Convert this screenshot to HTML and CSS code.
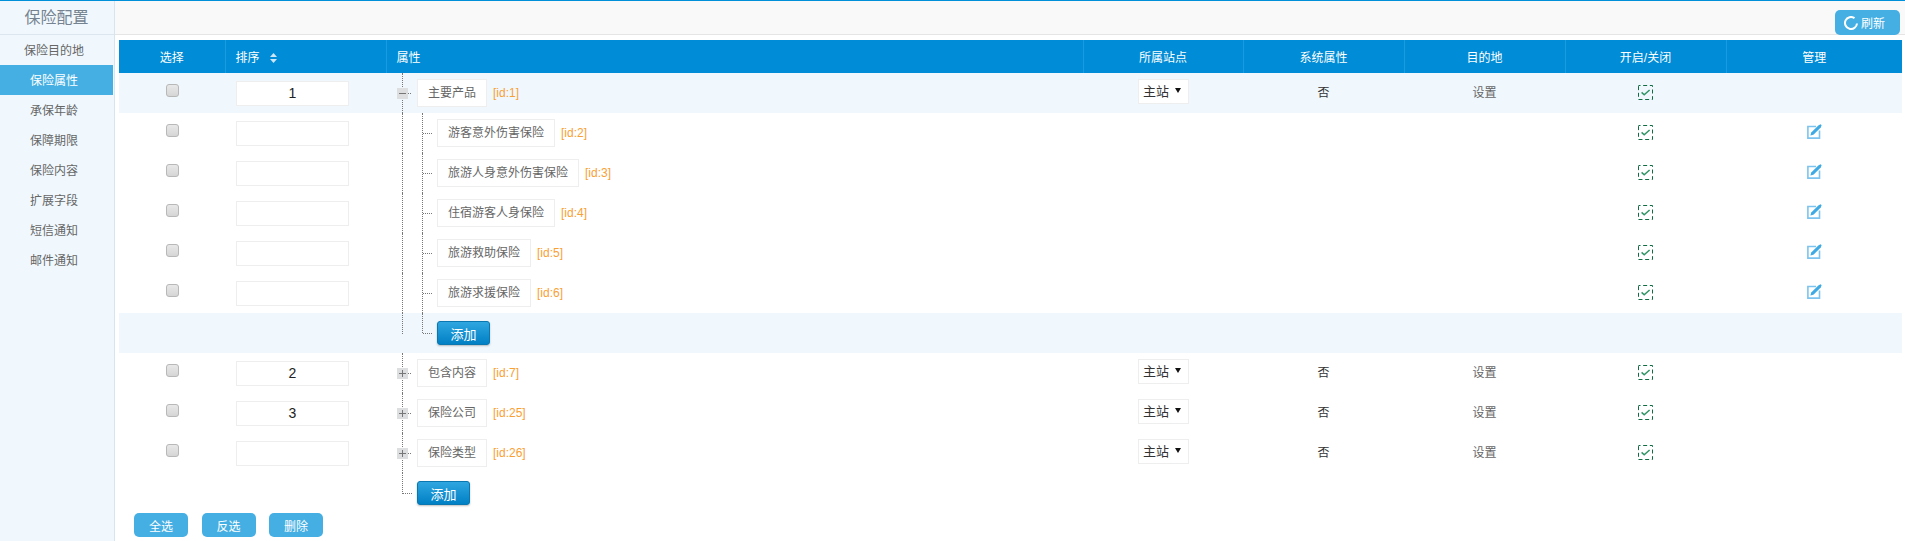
FILE: index.html
```html
<!DOCTYPE html>
<html lang="zh">
<head>
<meta charset="utf-8">
<title>保险配置</title>
<link rel="stylesheet" href="styles.css">
</head>
<body>
<div class="page">
  <aside class="side">
    <h1 class="side-title">保险配置</h1>
    <nav class="side-nav">
      <a class="side-item">保险目的地</a>
      <a class="side-item active">保险属性</a>
      <a class="side-item">承保年龄</a>
      <a class="side-item">保障期限</a>
      <a class="side-item">保险内容</a>
      <a class="side-item">扩展字段</a>
      <a class="side-item">短信通知</a>
      <a class="side-item">邮件通知</a>
    </nav>
  </aside>
  <main class="main">
    <div class="toolbar">
      <button class="btn refresh"><svg class="refresh-icon" viewBox="0 0 14 14"><path d="M10.5 2.1A6 6 0 1 0 13 7.5" fill="none" stroke="#fff" stroke-width="2"/></svg>刷新</button>
    </div>
    <div class="content">
      <table class="grid">
        <colgroup>
          <col class="c1"><col class="c2"><col class="c3"><col class="c4"><col class="c5"><col class="c6"><col class="c7"><col class="c8">
        </colgroup>
        <thead>
          <tr>
            <th>选择</th>
            <th class="left">排序<svg class="sort" viewBox="0 0 7 10"><path d="M3.5 0 7 4H0zM3.5 10 0 6h7z" fill="#cfe6f5"/></svg></th>
            <th class="left tree-head">属性</th>
            <th>所属站点</th><th>系统属性</th><th>目的地</th><th>开启/关闭</th><th>管理</th>
          </tr>
        </thead>
        <tbody>
          <tr class="tint">
            <td><input class="check" type="checkbox"></td>
            <td class="order"><input class="sort-input" type="text" value="1"></td>
            <td class="tree"><div class="node"><i class="toggle minus"></i><span class="label">主要产品</span><span class="id">[id:1]</span></div></td>
            <td><div class="site"><select class="site-select"><option>主站</option></select></div></td>
            <td class="plain dark">否</td><td class="plain">设置</td>
            <td><svg class="icon ok" viewBox="0 0 15 15"><use href="#ok"/></svg></td>
            <td></td>
          </tr>
          <tr>
            <td><input class="check" type="checkbox"></td>
            <td class="order"><input class="sort-input" type="text"></td>
            <td class="tree branch"><div class="node child"><span class="label">游客意外伤害保险</span><span class="id">[id:2]</span></div></td>
            <td></td><td></td><td></td>
            <td><svg class="icon ok" viewBox="0 0 15 15"><use href="#ok"/></svg></td>
            <td><svg class="icon pen" viewBox="0 0 15 15"><use href="#edit"/></svg></td>
          </tr>
          <tr>
            <td><input class="check" type="checkbox"></td>
            <td class="order"><input class="sort-input" type="text"></td>
            <td class="tree branch"><div class="node child"><span class="label">旅游人身意外伤害保险</span><span class="id">[id:3]</span></div></td>
            <td></td><td></td><td></td>
            <td><svg class="icon ok" viewBox="0 0 15 15"><use href="#ok"/></svg></td>
            <td><svg class="icon pen" viewBox="0 0 15 15"><use href="#edit"/></svg></td>
          </tr>
          <tr>
            <td><input class="check" type="checkbox"></td>
            <td class="order"><input class="sort-input" type="text"></td>
            <td class="tree branch"><div class="node child"><span class="label">住宿游客人身保险</span><span class="id">[id:4]</span></div></td>
            <td></td><td></td><td></td>
            <td><svg class="icon ok" viewBox="0 0 15 15"><use href="#ok"/></svg></td>
            <td><svg class="icon pen" viewBox="0 0 15 15"><use href="#edit"/></svg></td>
          </tr>
          <tr>
            <td><input class="check" type="checkbox"></td>
            <td class="order"><input class="sort-input" type="text"></td>
            <td class="tree branch"><div class="node child"><span class="label">旅游救助保险</span><span class="id">[id:5]</span></div></td>
            <td></td><td></td><td></td>
            <td><svg class="icon ok" viewBox="0 0 15 15"><use href="#ok"/></svg></td>
            <td><svg class="icon pen" viewBox="0 0 15 15"><use href="#edit"/></svg></td>
          </tr>
          <tr>
            <td><input class="check" type="checkbox"></td>
            <td class="order"><input class="sort-input" type="text"></td>
            <td class="tree branch"><div class="node child"><span class="label">旅游求援保险</span><span class="id">[id:6]</span></div></td>
            <td></td><td></td><td></td>
            <td><svg class="icon ok" viewBox="0 0 15 15"><use href="#ok"/></svg></td>
            <td><svg class="icon pen" viewBox="0 0 15 15"><use href="#edit"/></svg></td>
          </tr>
          <tr class="tint">
            <td></td><td></td>
            <td class="tree branch end"><div class="node child"><button class="add">添加</button></div></td>
            <td></td><td></td><td></td><td></td><td></td>
          </tr>
          <tr>
            <td><input class="check" type="checkbox"></td>
            <td class="order"><input class="sort-input" type="text" value="2"></td>
            <td class="tree"><div class="node"><i class="toggle"></i><span class="label">包含内容</span><span class="id">[id:7]</span></div></td>
            <td><div class="site"><select class="site-select"><option>主站</option></select></div></td>
            <td class="plain dark">否</td><td class="plain">设置</td>
            <td><svg class="icon ok" viewBox="0 0 15 15"><use href="#ok"/></svg></td>
            <td></td>
          </tr>
          <tr>
            <td><input class="check" type="checkbox"></td>
            <td class="order"><input class="sort-input" type="text" value="3"></td>
            <td class="tree"><div class="node"><i class="toggle"></i><span class="label">保险公司</span><span class="id">[id:25]</span></div></td>
            <td><div class="site"><select class="site-select"><option>主站</option></select></div></td>
            <td class="plain dark">否</td><td class="plain">设置</td>
            <td><svg class="icon ok" viewBox="0 0 15 15"><use href="#ok"/></svg></td>
            <td></td>
          </tr>
          <tr>
            <td><input class="check" type="checkbox"></td>
            <td class="order"><input class="sort-input" type="text"></td>
            <td class="tree"><div class="node"><i class="toggle"></i><span class="label">保险类型</span><span class="id">[id:26]</span></div></td>
            <td><div class="site"><select class="site-select"><option>主站</option></select></div></td>
            <td class="plain dark">否</td><td class="plain">设置</td>
            <td><svg class="icon ok" viewBox="0 0 15 15"><use href="#ok"/></svg></td>
            <td></td>
          </tr>
          <tr>
            <td></td><td></td>
            <td class="tree end"><div class="node top-add"><button class="add">添加</button></div></td>
            <td></td><td></td><td></td><td></td><td></td>
          </tr>
        </tbody>
      </table>
      <div class="actions">
        <button class="btn">全选</button>
        <button class="btn">反选</button>
        <button class="btn">删除</button>
      </div>
    </div>
  </main>
</div>
<svg class="defs" width="0" height="0">
  <symbol id="ok" viewBox="0 0 15 15">
    <rect x="0.5" y="0.5" width="14" height="14" fill="none" stroke="#0f6b42" stroke-width="1" stroke-dasharray="4 2.67" stroke-dashoffset="2"/>
    <path d="M3.6 7.4 6.2 9.8 11.6 5" fill="none" stroke="#2f9465" stroke-width="1.5"/>
  </symbol>
  <symbol id="edit" viewBox="0 0 15 15">
    <path d="M9 2.5H.9v11.6h11.6V6.5" fill="none" stroke="#7cc4ef" stroke-width="1.6"/>
    <path d="M3.4 11.6 4.2 8.6 11.6 1.2 13.8 .2 14.6 1.2 13.8 3.4 6.4 10.8Z" fill="#3fa9e4"/>
  </symbol>
</svg>
</body>
</html>
```
FILE: styles.css
```css
* { box-sizing: border-box; }
html, body { margin: 0; padding: 0; height: 100%; }
body {
  font-family: "Liberation Sans", "Noto Sans CJK SC", sans-serif;
  font-size: 12px;
  color: #666;
  background: #fff;
  overflow: hidden;
}
.page {
  display: flex;
  height: 100vh;
  border-top: 1px solid #0090d9;
}
.side {
  width: 115px;
  flex: none;
  background: #f0f8fe;
  border-right: 1px solid #d6e6f0;
}
.side-title {
  margin: 0;
  height: 34px;
  line-height: 33px;
  padding-right: 1px;
  font-size: 16px;
  font-weight: 400;
  text-align: center;
  color: #75828f;
  border-bottom: 1px solid #dbe6ee;
}
.side-nav { display: flex; flex-direction: column; }
.side-item {
  display: block;
  width: 113px;
  height: 30px;
  line-height: 32px;
  padding-right: 5px;
  text-align: center;
  color: #666;
}
.side-item.active { background: #45afe3; color: #fff; }
.main { flex: 1; min-width: 0; }
.toolbar {
  display: flex;
  justify-content: flex-end;
  align-items: flex-start;
  height: 34px;
  padding: 9px 5px 0 0;
  background: #f9f9f9;
  border-bottom: 1px solid #e5e5e5;
}
.btn {
  display: block;
  width: 54px;
  height: 24px;
  padding: 0;
  border: 0;
  border-radius: 5px;
  background: #45afe3;
  color: #fff;
  font: inherit;
  text-align: center;
}
.refresh {
  display: flex;
  align-items: center;
  width: 65px;
  height: 25px;
  padding-left: 9px;
  gap: 3px;
}
.refresh-icon { width: 14px; height: 14px; flex: none; }
.content { padding: 5px 3px 0 4px; }
.grid {
  width: 1783px;
  table-layout: fixed;
  border-collapse: collapse;
}
.c1 { width: 106px; }
.c2 { width: 161px; }
.c3 { width: 697px; }
.c4 { width: 160px; }
.c5 { width: 161px; }
.c6 { width: 161px; }
.c7 { width: 161px; }
.c8 { width: 176px; }
th {
  height: 33px;
  padding: 0;
  background: #008cd6;
  color: #fff;
  font-weight: 400;
  text-align: center;
  border-left: 1px solid #1a9be0;
}
th:first-child { border-left: 0; }
th.left { text-align: left; padding-left: 10px; }
.sort { width: 7px; height: 10px; margin-left: 10px; vertical-align: -1px; }
td {
  height: 40px;
  padding: 0;
  text-align: center;
}
.tint td { background: #f0f8fe; }
.plain { padding-bottom: 3px; }
.dark { color: #333; }
.check {
  appearance: none;
  display: inline-block;
  width: 13px;
  height: 13px;
  margin: 0 0 6px;
  vertical-align: middle;
  border: 1px solid #b8b8b8;
  border-radius: 3px;
  background: linear-gradient(#e8e8e8, #d6d6d6);
}
.order { text-align: left; padding-left: 11px; }
.sort-input {
  display: block;
  width: 113px;
  height: 25px;
  margin: 0;
  padding: 0;
  border: 1px solid #eee;
  background: #fff;
  color: #222;
  font: 14px "Liberation Sans", sans-serif;
  text-align: center;
}
.tree { position: relative; text-align: left; }
.tree::before {
  content: "";
  position: absolute;
  left: 16px;
  top: 0;
  bottom: 0;
  border-left: 1px dotted #777;
}
.tree.end::before { bottom: 19px; }
.tree.end .top-add::before {
  content: "";
  position: absolute;
  left: 17px;
  top: 20px;
  width: 9px;
  border-top: 1px dotted #777;
}
.branch::after {
  content: "";
  position: absolute;
  left: 36px;
  top: 0;
  bottom: 0;
  border-left: 1px dotted #777;
}
.branch.end::after { bottom: 20px; }
.child::before {
  content: "";
  position: absolute;
  left: 37px;
  top: 20px;
  width: 9px;
  border-top: 1px dotted #777;
}
.node {
  display: flex;
  align-items: center;
  height: 40px;
  padding-left: 11px;
}
.child { padding-left: 51px; }
.top-add { padding-left: 31px; }
.toggle {
  position: relative;
  z-index: 1;
  flex: none;
  width: 11px;
  height: 11px;
  margin-right: 9px;
  background:
    linear-gradient(#777, #777) center / 7px 1px no-repeat,
    linear-gradient(#777, #777) center / 1px 7px no-repeat,
    #dcdee0;
}
.toggle.minus {
  background:
    linear-gradient(#777, #777) center / 7px 1px no-repeat,
    #dcdee0;
}
.toggle::after {
  content: "";
  position: absolute;
  left: 11px;
  top: 5px;
  width: 3px;
  border-top: 1px dotted #777;
}
.label {
  display: block;
  height: 28px;
  line-height: 26px;
  padding: 0 10px;
  background: #fff;
  border: 1px solid #eee;
  color: #666;
  white-space: nowrap;
}
.id {
  margin-left: 6px;
  color: #f9a035;
  font-family: "Liberation Sans", sans-serif;
}
.site {
  position: relative;
  width: 51px;
  height: 25px;
  margin: 0 0 3px 55px;
}
.site::after {
  content: "";
  position: absolute;
  right: 8px;
  top: 9px;
  border: 3px solid transparent;
  border-top: 5px solid #111;
  border-bottom: 0;
}
.site-select {
  appearance: none;
  display: block;
  width: 51px;
  height: 25px;
  padding: 0 0 0 4px;
  border: 1px solid #eee;
  border-radius: 0;
  background: #fff;
  color: #333;
  font: 13px "Liberation Sans", "Noto Sans CJK SC", sans-serif;
}
.add {
  display: block;
  width: 53px;
  height: 24px;
  padding: 0;
  border: 1px solid #0a77b0;
  border-radius: 3px;
  background: linear-gradient(#2fa6e0, #0080c5);
  box-shadow: 0 1px 2px rgba(0, 0, 0, .25);
  color: #fff;
  font: 13px "Liberation Sans", "Noto Sans CJK SC", sans-serif;
}
.icon { display: inline-block; width: 15px; height: 15px; vertical-align: middle; }
.ok { margin-bottom: 1px; }
.pen { margin-bottom: 4px; }
.actions {
  display: flex;
  gap: 13.5px;
  padding-left: 15px;
}
.defs { position: absolute; }
```
